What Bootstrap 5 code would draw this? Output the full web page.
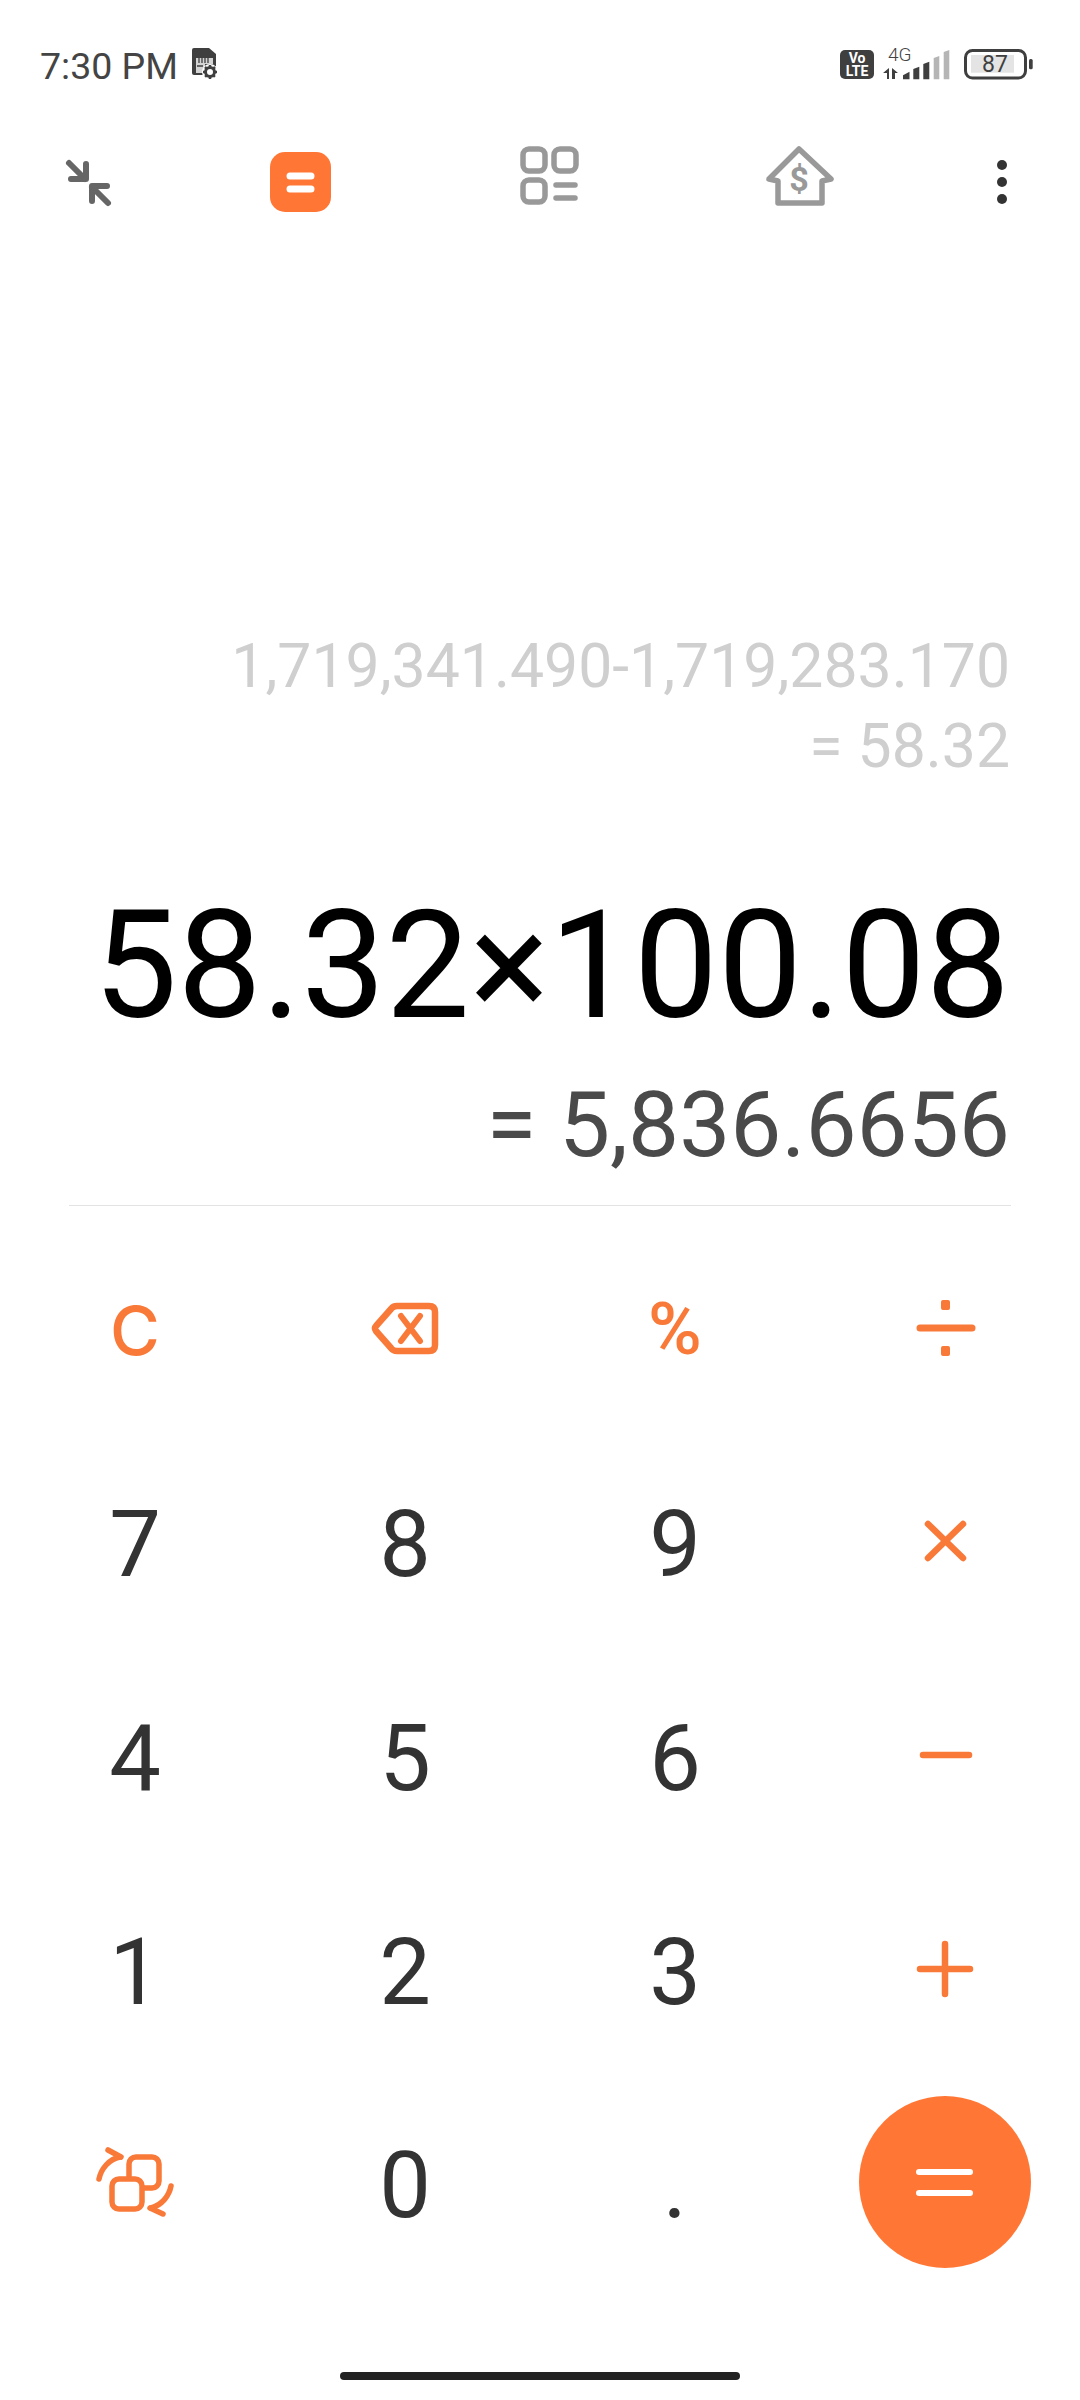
<!DOCTYPE html>
<html lang="en">
<head>
    <meta charset="UTF-8">
    <title>Calculator</title>
    <link href="https://cdn.jsdelivr.net/npm/bootstrap@5.3.0/dist/css/bootstrap.min.css" rel="stylesheet">
    <style>
        body { background: #fff; font-family: Roboto, "Liberation Sans", sans-serif; }
        .screen { width: 1080px; height: 2400px; overflow: hidden; }
        .status-row { height: 120px; padding: 40px 47px 0 40px; }
        .clock { font-size: 37.5px; line-height: 46px; padding-top: 3px; color: #444; }
        .sim-icon { margin: 6px 0 0 13px; }
        .tool-row { display: grid; grid-template-columns: 178px 244px 252px 250px 156px; height: 120px; }
        .display { height: 965px; padding: 0 70px 30px 60px; }
        .history-text { font-weight: 400; font-size: 60.7px; line-height: 80px; color: #cfcfcf; }
        .expr-text { font-size: 149.8px; line-height: 170px; color: #000; margin-top: 94px; margin-bottom: 24px; white-space: nowrap; }
        .result-text { font-size: 91px; line-height: 100px; color: #4a4a4a; }
        .divider-line { height: 1px; background: #e3e3e3; margin: 0 69px; }
        .keypad { display: grid; grid-template-columns: repeat(4, 270px); grid-auto-rows: 213.6px; margin-top: 15px; }
        .key-cell { display: flex; justify-content: center; align-items: center; padding: 0; color: #333; font-size: 92px; font-weight: 400; line-height: 1; }
        .key-digit { padding-top: 8px; }
        .key-op { color: #f97939; font-size: 73px; font-weight: 500; padding-top: 4px; }
        .key-clear { font-family: Inter, Roboto, sans-serif; font-size: 68px; }
        .equals-disc { width: 172px; height: 172px; background: #ff7635; }
        .home-bar { width: 400px; height: 8px; background: #222; margin: 83px auto 0; }
    </style>
</head>
<body>
<div class="screen d-flex flex-column">
    <div class="status-row d-flex justify-content-between align-items-start">
        <div class="d-flex align-items-start">
            <span class="clock">7:30 PM</span>
            <svg class="sim-icon" width="28" height="34" viewBox="0 0 28 34">
                <path d="M3 2h15l7 6v21H3a2 2 0 0 1-2-2V4a2 2 0 0 1 2-2z" fill="#3f3f3f"/>
                <path d="M5 12h17v6h-8v9H5z" fill="#d4d4d4"/>
                <path d="M8 12v5M11 12v5M14 12v5M17 12v5M6 20h6" stroke="#3f3f3f" stroke-width="1.3"/>
                <circle cx="19" cy="26" r="8" fill="#fff"/>
                <circle cx="19" cy="26" r="4.5" fill="none" stroke="#3f3f3f" stroke-width="3"/>
                <path d="M19 19v14M12 26h14M14 21l10 10M24 21l-10 10" stroke="#3f3f3f" stroke-width="2.5" stroke-dasharray="2.5 9 2.5"/>
            </svg>
        </div>
        <svg width="193" height="42" viewBox="0 -5 193 42">
            <rect x="0" y="5" width="34" height="29" rx="5" fill="#3f3f3f"/>
            <text x="17" y="18" text-anchor="middle" font-family="Roboto" font-weight="700" font-size="14" fill="#fff">Vo</text>
            <text x="17" y="31" text-anchor="middle" font-family="Roboto" font-weight="700" font-size="14" fill="#fff">LTE</text>
            <text x="48" y="16" font-family="Roboto" font-weight="300" font-size="19" fill="#444">4G</text>
            <path d="M43 28l6-5v11h-2v-6zM52 23l6 5h-3v6h-3z" fill="#3f3f3f"/>
            <path d="M63 34.3v-4l6.500-3.600v7.600zM73.300 34.300V24l6-2.300v12.600zM83.300 34.300V19l6-2.300v17.600z" fill="#3f3f3f"/>
            <path d="M93.700 34.300V13l5.600-2v23.300zM103.700 34.300V7l5.600-2v29.300z" fill="#b5b5b5"/>
            <rect x="125.500" y="5.500" width="60" height="27.500" rx="7" fill="#fff" stroke="#3f3f3f" stroke-width="3"/>
            <rect x="131" y="10" width="43" height="17.700" fill="#e4e4e4"/>
            <rect x="189" y="14" width="3.700" height="10.300" rx="1.500" fill="#3f3f3f"/>
            <text x="155" y="27" text-anchor="middle" font-family="Roboto" font-size="23" fill="#3f3f3f">87</text>
        </svg>
    </div>

    <div class="tool-row">
        <div class="d-flex justify-content-center align-items-center">
            <svg width="80" height="80" viewBox="49 140 80 80">
                <g stroke="#666" stroke-width="6" fill="none" stroke-linecap="round" stroke-linejoin="round">
                    <path d="M69 163l16 16M86 164v15H71"/>
                    <path d="M108 203L92 187M92 201v-15h15"/>
                </g>
            </svg>
        </div>
        <div class="d-flex justify-content-center align-items-center">
            <svg width="80" height="80" viewBox="260 140 80 80">
                <rect x="270" y="152" width="61" height="60" rx="15" fill="#ff7635"/>
                <path d="M290 176h21M290 189h21" stroke="#fff" stroke-width="7" stroke-linecap="round"/>
            </svg>
        </div>
        <div class="d-flex justify-content-center align-items-center">
            <svg width="80" height="80" viewBox="508 140 80 80">
                <g stroke="#999" stroke-width="5.500" fill="none" stroke-linecap="round">
                    <rect x="523" y="149" width="22" height="22" rx="6"/>
                    <rect x="554" y="149" width="22" height="22" rx="6"/>
                    <rect x="523" y="180" width="22" height="22" rx="6"/>
                    <path d="M556 185h19M556 198h19"/>
                </g>
            </svg>
        </div>
        <div class="d-flex justify-content-center align-items-center">
            <svg width="80" height="80" viewBox="759 140 80 80">
                <path d="M799 149l32 30-9 2v22h-44v-22l-9-2z" fill="none" stroke="#999" stroke-width="5.500" stroke-linejoin="round"/>
                <text x="799" y="191" text-anchor="middle" font-family="Roboto" font-weight="700" font-size="34" fill="#999">$</text>
            </svg>
        </div>
        <div class="d-flex justify-content-center align-items-center">
            <svg width="80" height="80" viewBox="962 140 80 80">
                <circle cx="1002" cy="165" r="5" fill="#333"/>
                <circle cx="1002" cy="182" r="5" fill="#333"/>
                <circle cx="1002" cy="199" r="5" fill="#333"/>
            </svg>
        </div>
    </div>

    <div class="display d-flex flex-column justify-content-end align-items-end">
        <div class="history-text">1,719,341.490-1,719,283.170</div>
        <div class="history-text">= 58.32</div>
        <div class="expr-text">58.32×100.08</div>
        <div class="result-text">= 5,836.6656</div>
    </div>
    <div class="divider-line"></div>

    <div class="keypad">
        <button class="btn key-cell key-op key-clear border-0">C</button>
        <button class="btn key-cell border-0">
            <svg width="80" height="70" viewBox="365 1294 80 70">
                <path d="M397 1307h32q6 0 6 6v33q0 6-6 6h-32q-4 0-6-3l-15-17q-2-3 0-5l15-17q2-3 6-3z" fill="none" stroke="#f97939" stroke-width="6.500" stroke-linejoin="round"/>
                <path d="M401 1317l19 25M420 1317l-19 25" stroke="#f97939" stroke-width="6" stroke-linecap="round"/>
            </svg>
        </button>
        <button class="btn key-cell key-op border-0">%</button>
        <button class="btn key-cell border-0">
            <svg width="80" height="70" viewBox="905 1294 80 70">
                <path d="M920 1329h52" stroke="#f97939" stroke-width="7" stroke-linecap="round"/>
                <rect x="941" y="1301" width="9" height="10" rx="2" fill="#f97939"/>
                <rect x="941" y="1347" width="9" height="10" rx="2" fill="#f97939"/>
            </svg>
        </button>

        <button class="btn key-cell key-digit border-0">7</button>
        <button class="btn key-cell key-digit border-0">8</button>
        <button class="btn key-cell key-digit border-0">9</button>
        <button class="btn key-cell border-0">
            <svg width="70" height="70" viewBox="910 1507 70 70">
                <path d="M928 1525l35 34M963 1525l-35 34" stroke="#f97939" stroke-width="6.500" stroke-linecap="round"/>
            </svg>
        </button>

        <button class="btn key-cell key-digit border-0">4</button>
        <button class="btn key-cell key-digit border-0">5</button>
        <button class="btn key-cell key-digit border-0">6</button>
        <button class="btn key-cell border-0">
            <svg width="70" height="70" viewBox="910 1719 70 70">
                <path d="M923 1754h46" stroke="#f97939" stroke-width="6.500" stroke-linecap="round"/>
            </svg>
        </button>

        <button class="btn key-cell key-digit border-0">1</button>
        <button class="btn key-cell key-digit border-0">2</button>
        <button class="btn key-cell key-digit border-0">3</button>
        <button class="btn key-cell border-0">
            <svg width="70" height="70" viewBox="910 1933 70 70">
                <path d="M920 1968h50M945 1943v50" stroke="#f97939" stroke-width="6.500" stroke-linecap="round"/>
            </svg>
        </button>

        <button class="btn key-cell border-0">
            <svg width="90" height="80" viewBox="90 2140 90 80">
                <g fill="none" stroke="#f97939" stroke-width="5.500" stroke-linecap="round" stroke-linejoin="round">
                    <rect x="129" y="2155" width="30" height="31" rx="7"/>
                    <rect x="112" y="2177" width="30" height="30" rx="7" fill="#fff"/>
                    <path d="M99 2177c2-10 10-20 21-22"/>
                    <path d="M108 2148l13 7"/>
                    <path d="M171 2184c-2 10-9 19-20 22"/>
                    <path d="M163 2212l-13-6"/>
                </g>
            </svg>
        </button>
        <button class="btn key-cell key-digit border-0">0</button>
        <button class="btn key-cell key-digit border-0">.</button>
        <div class="d-flex justify-content-center align-items-center">
            <button class="btn equals-disc rounded-circle border-0 p-0 d-flex justify-content-center align-items-center">
                <svg width="64" height="40" viewBox="914 2160 64 40">
                    <path d="M920 2170h51M920 2191h51" stroke="#fff" stroke-width="6" stroke-linecap="round"/>
                </svg>
            </button>
        </div>
    </div>
    <div class="home-bar rounded-pill"></div>
</div>
<script src="https://cdn.jsdelivr.net/npm/bootstrap@5.3.0/dist/js/bootstrap.bundle.min.js"></script>
</body>
</html>
